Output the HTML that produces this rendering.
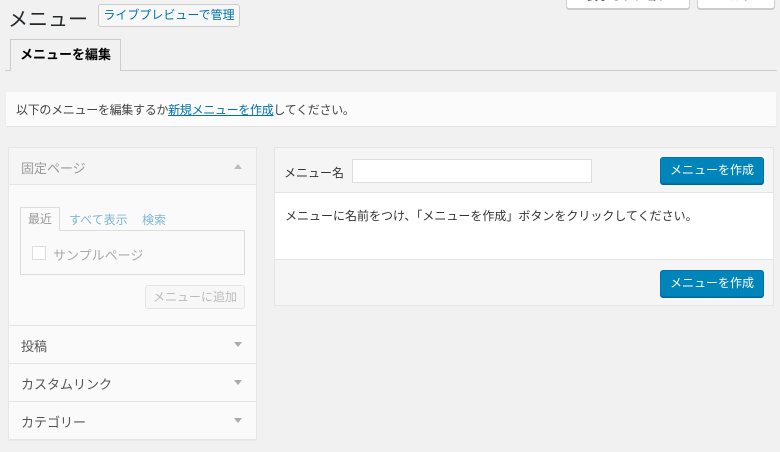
<!DOCTYPE html>
<html><head><meta charset="utf-8"><style>
*{box-sizing:border-box;margin:0;padding:0}
body{width:780px;height:452px;overflow:hidden;background:#f1f1f1;font-family:"Liberation Sans","Noto Sans CJK JP",sans-serif;font-size:13px;color:#444;position:relative}
.a{position:absolute}
.btn{position:absolute;background:#f7f7f7;border:1px solid #ccc;border-radius:3px;box-shadow:0 1px 0 #ccc;font-size:12px;text-align:center}
.pri{position:absolute;background:#0085ba;border:1px solid #0073aa;border-radius:3px;box-shadow:0 1px 0 #006799;color:#fff;font-size:12px;text-align:center;line-height:25px}
.sec{position:absolute;left:9px;width:247px;height:38px;border-top:1px solid #e5e5e5;background:#fafafa;color:#555;padding:10px 12px;font-size:13px}
.arr{position:absolute;right:14px;top:16px;width:0;height:0;border-left:4px solid transparent;border-right:4px solid transparent;border-top:5px solid #aaa}
</style></head><body>
<div class="btn" style="left:566px;top:-16px;width:124px;height:25px;background:#fff;color:#555;line-height:22px">表示オプション</div>
<div class="btn" style="left:697px;top:-16px;width:78px;height:25px;background:#fff;color:#555;line-height:22px">ヘルプ</div>
<div class="a" style="left:8px;top:3px;font-size:20px;letter-spacing:0px;color:#23282d">メニュー</div>
<div class="btn" style="left:98px;top:4px;width:142px;height:23px;line-height:21px;color:#0073aa;box-shadow:none">ライブプレビューで管理</div>
<div class="a" style="left:5px;top:70px;width:772px;border-top:1px solid #ccc"></div>
<div class="a" style="left:10px;top:39px;width:111px;height:32px;border:1px solid #ccc;border-bottom:none;background:#f1f1f1;font-weight:bold;font-size:13px;color:#000;text-align:center;line-height:30px">メニューを編集</div>
<div class="a" style="left:6px;top:92px;width:770px;height:34px;background:#fbfbfb;box-shadow:0 1px 1px rgba(0,0,0,.06);padding:9px 10px;font-size:12px;letter-spacing:-0.3px">以下のメニューを編集するか<span style="color:#0073aa;text-decoration:underline">新規メニューを作成</span>してください。</div>

<div class="a" style="left:8px;top:147px;width:249px;height:293px;background:#fff;border:1px solid #e5e5e5;box-shadow:0 1px 1px rgba(0,0,0,.04)"></div>
<div class="a" style="left:9px;top:148px;width:247px;height:37px;background:#f5f5f5;border-bottom:1px solid #e5e5e5;color:#999;padding:10px 12px">固定ページ<span class="a" style="right:14px;top:16px;border-left:4px solid transparent;border-right:4px solid transparent;border-bottom:5px solid #bbb"></span></div>
<div class="a" style="left:9px;top:185px;width:247px;height:140px;background:#fafafa"></div>
<div class="a" style="left:20px;top:230px;width:225px;height:45px;border:1px solid #ddd;background:#fafafa"></div>
<div class="a" style="left:20px;top:207px;width:40px;height:24px;border:1px solid #ddd;border-bottom:none;background:#fafafa;color:#999;font-size:12px;text-align:center;line-height:22px">最近</div>
<div class="a" style="left:69px;top:211px;font-size:12px;color:#7fb7d3">すべて表示</div>
<div class="a" style="left:142px;top:211px;font-size:12px;color:#7fb7d3">検索</div>
<div class="a" style="left:32px;top:246px;width:14px;height:14px;border:1px solid #ddd;background:#fff"></div>
<div class="a" style="left:53px;top:245px;color:#aaa;font-size:13px">サンプルページ</div>
<div class="a" style="left:145px;top:285px;width:100px;height:24px;border:1px solid #e5e5e5;border-radius:3px;background:#f7f7f7;color:#bbb;font-size:12px;text-align:center;line-height:22px">メニューに追加</div>
<div class="sec" style="top:325px">投稿<span class="arr"></span></div>
<div class="sec" style="top:363px">カスタムリンク<span class="arr"></span></div>
<div class="sec" style="top:401px;height:38px">カテゴリー<span class="arr"></span></div>

<div class="a" style="left:274px;top:147px;width:500px;height:159px;background:#f5f5f5;border:1px solid #e5e5e5"></div>
<div class="a" style="left:275px;top:192px;width:498px;height:68px;background:#fff;border-top:1px solid #e5e5e5;border-bottom:1px solid #e5e5e5;padding:14px 10px;font-size:12px;color:#333">メニューに名前をつけ、「メニューを作成」ボタンをクリックしてください。</div>
<div class="a" style="left:284px;top:164px;font-size:12px;color:#333">メニュー名</div>
<div class="a" style="left:352px;top:159px;width:240px;height:24px;background:#fff;border:1px solid #ddd"></div>
<div class="pri" style="left:660px;top:157px;width:104px;height:27px">メニューを作成</div>
<div class="pri" style="left:660px;top:270px;width:104px;height:27px">メニューを作成</div>
</body></html>
